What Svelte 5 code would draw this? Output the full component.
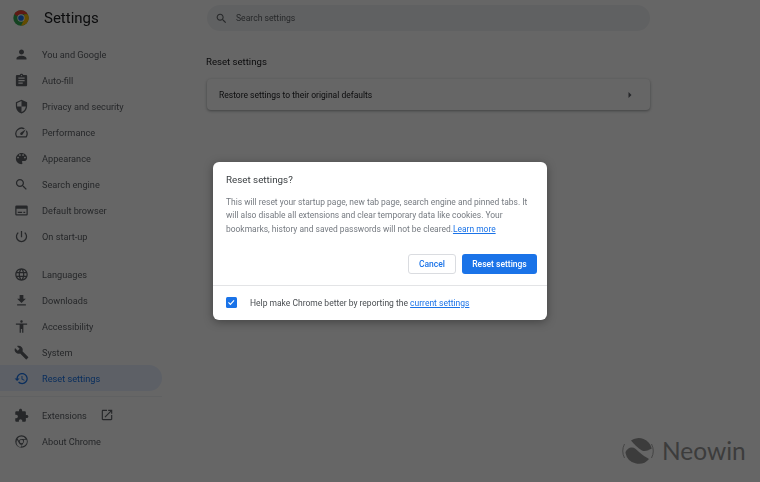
<script lang="ts">
  // Chrome settings page with the "Reset settings?" dialog open over it.
  const icons: Record<string, string> = {
    person: 'M12 12c2.21 0 4-1.79 4-4s-1.79-4-4-4-4 1.79-4 4 1.79 4 4 4zm0 2c-2.67 0-8 1.34-8 4v2h16v-2c0-2.66-5.33-4-8-4z',
    fill: 'M19 3h-4.18C14.4 1.84 13.3 1 12 1c-1.3 0-2.4.84-2.82 2H5c-1.1 0-2 .9-2 2v14c0 1.1.9 2 2 2h14c1.1 0 2-.9 2-2V5c0-1.1-.9-2-2-2zm-7 0c.55 0 1 .45 1 1s-.45 1-1 1-1-.45-1-1 .45-1 1-1zm2 14H7v-2h7v2zm3-4H7v-2h10v2zm0-4H7V7h10v2z',
    shield: 'M12 1L3 5v6c0 5.55 3.84 10.74 9 12 5.16-1.26 9-6.45 9-12V5l-9-4zm0 10.99h7c-.53 4.12-3.28 7.79-7 8.94V12H5V6.3l7-3.11v8.8z',
    speed: 'M20.38 8.57l-1.23 1.85a8 8 0 0 1-.22 7.58H5.07A8 8 0 0 1 15.58 6.85l1.85-1.23A10 10 0 0 0 3.35 19a2 2 0 0 0 1.72 1h13.85a2 2 0 0 0 1.74-1 10 10 0 0 0-.27-10.44zm-9.79 6.84a2 2 0 0 0 2.83 0l5.66-8.49-8.49 5.66a2 2 0 0 0 0 2.83z',
    palette: 'M12 3c-4.97 0-9 4.03-9 9s4.03 9 9 9c.83 0 1.5-.67 1.5-1.5 0-.39-.15-.74-.39-1.01-.23-.26-.38-.61-.38-.99 0-.83.67-1.5 1.5-1.5H16c2.76 0 5-2.24 5-5 0-4.42-4.03-8-9-8zm-5.5 9c-.83 0-1.5-.67-1.5-1.5S5.67 9 6.5 9 8 9.67 8 10.5 7.33 12 6.5 12zm3-4C8.67 8 8 7.33 8 6.5S8.67 5 9.5 5s1.5.67 1.5 1.5S10.33 8 9.5 8zm5 0c-.83 0-1.5-.67-1.5-1.5S13.67 5 14.5 5s1.5.67 1.5 1.5S15.33 8 14.5 8zm3 4c-.83 0-1.5-.67-1.5-1.5S16.67 9 17.5 9s1.5.67 1.5 1.5-.67 1.5-1.5 1.5z',
    search: 'M15.5 14h-.79l-.28-.27C15.41 12.59 16 11.11 16 9.5 16 5.91 13.09 3 9.5 3S3 5.91 3 9.5 5.91 16 9.5 16c1.61 0 3.09-.59 4.23-1.57l.27.28v.79l5 4.99L20.49 19l-4.99-5zm-6 0C7.01 14 5 11.99 5 9.5S7.01 5 9.5 5 14 7.01 14 9.5 11.99 14 9.5 14z',
    browser: 'M20 4H4a2 2 0 0 0-2 2v12a2 2 0 0 0 2 2h16a2 2 0 0 0 2-2V6a2 2 0 0 0-2-2zm0 14H4V9h16zM6 14h7v2H6zm9 0h3v2h-3z',
    power: 'M13 3h-2v10h2V3zm4.83 2.17l-1.42 1.42C17.99 7.86 19 9.81 19 12c0 3.87-3.13 7-7 7s-7-3.13-7-7c0-2.19 1.01-4.14 2.58-5.42L6.17 5.17C4.23 6.82 3 9.26 3 12c0 4.97 4.03 9 9 9s9-4.03 9-9c0-2.74-1.23-5.18-3.17-6.83z',
    globe: 'M11.99 2C6.47 2 2 6.48 2 12s4.47 10 9.99 10C17.52 22 22 17.52 22 12S17.52 2 11.99 2zm6.93 6h-2.95c-.32-1.25-.78-2.45-1.38-3.56 1.84.63 3.37 1.91 4.33 3.56zM12 4.04c.83 1.2 1.48 2.53 1.91 3.96h-3.82c.43-1.43 1.08-2.76 1.91-3.96zM4.26 14C4.1 13.36 4 12.69 4 12s.1-1.36.26-2h3.38c-.08.66-.14 1.32-.14 2 0 .68.06 1.34.14 2H4.26zm.82 2h2.95c.32 1.25.78 2.45 1.38 3.56-1.84-.63-3.37-1.9-4.33-3.56zm2.95-8H5.08c.96-1.66 2.49-2.93 4.33-3.56C8.81 5.55 8.35 6.75 8.03 8zM12 19.96c-.83-1.2-1.48-2.53-1.91-3.96h3.82c-.43 1.43-1.08 2.76-1.91 3.96zM14.34 14H9.66c-.09-.66-.16-1.32-.16-2 0-.68.07-1.35.16-2h4.68c.09.65.16 1.32.16 2 0 .68-.07 1.34-.16 2zm.25 5.56c.6-1.11 1.06-2.31 1.38-3.56h2.95c-.96 1.65-2.49 2.93-4.33 3.56zM16.36 14c.08-.66.14-1.32.14-2 0-.68-.06-1.34-.14-2h3.38c.16.64.26 1.31.26 2s-.1 1.36-.26 2h-3.38z',
    download: 'M19 9h-4V3H9v6H5l7 7 7-7zM5 18v2h14v-2H5z',
    access: 'M12 2c1.1 0 2 .9 2 2s-.9 2-2 2-2-.9-2-2 .9-2 2-2zm9 7h-6v13h-2v-6h-2v6H9V9H3V7h18v2z',
    wrench: 'M22.7 19l-9.1-9.1c.9-2.3.4-5-1.5-6.9-2-2-5-2.4-7.4-1.3L9 6 6 9 1.6 4.7C.4 7.1.9 10.1 2.9 12.1c1.9 1.9 4.6 2.4 6.9 1.5l9.1 9.1c.4.4 1 .4 1.4 0l2.3-2.3c.5-.4.5-1.1.1-1.4z',
    restore: 'M13 3c-4.97 0-9 4.03-9 9H1l3.89 3.89.07.14L9 12H6c0-3.87 3.13-7 7-7s7 3.13 7 7-3.13 7-7 7c-1.93 0-3.68-.79-4.94-2.06l-1.42 1.42C8.27 19.99 10.51 21 13 21c4.97 0 9-4.03 9-9s-4.03-9-9-9zm-1 5v5l4.28 2.54.72-1.21-3.5-2.08V8H12z',
    puzzle: 'M20.5 11H19V7c0-1.1-.9-2-2-2h-4V3.5C13 2.12 11.88 1 10.5 1S8 2.12 8 3.5V5H4c-1.1 0-1.99.9-1.99 2v3.8H3.5c1.49 0 2.7 1.21 2.7 2.7s-1.21 2.7-2.7 2.7H2V20c0 1.1.9 2 2 2h3.8v-1.5c0-1.49 1.21-2.7 2.7-2.7 1.49 0 2.7 1.21 2.7 2.7V22H17c1.1 0 2-.9 2-2v-4h1.5c1.38 0 2.5-1.12 2.5-2.5S21.88 11 20.5 11z',
    open: 'M19 19H5V5h7V3H5c-1.11 0-2 .9-2 2v14c0 1.1.89 2 2 2h14c1.1 0 2-.9 2-2v-7h-2v7zM14 3v2h3.59l-9.83 9.83 1.41 1.41L19 6.41V10h2V3h-7z',
    chrome: 'M12 2a10 10 0 1 0 0 20 10 10 0 0 0 0-20zm0 2.2a7.8 7.8 0 0 1 6.6 3.6H12a4.3 4.3 0 0 0-4.1 3L5.6 7a7.8 7.8 0 0 1 6.4-2.8zM4.2 12c0-1 .2-2 .6-2.9l3.3 5.7a4.3 4.3 0 0 0 4.5 2.4l-2.3 4A7.8 7.8 0 0 1 4.2 12zm7.8 2.8a2.8 2.8 0 1 1 0-5.6 2.8 2.8 0 0 1 0 5.6zm.6 5a7.8 7.8 0 0 1-.9 0l3.3-5.6a4.3 4.3 0 0 0 .4-5.1h4.6a7.8 7.8 0 0 1-7.4 10.7z'
  };

  const groupA = [
    ['person', 'You and Google'],
    ['fill', 'Auto-fill'],
    ['shield', 'Privacy and security'],
    ['speed', 'Performance'],
    ['palette', 'Appearance'],
    ['search', 'Search engine'],
    ['browser', 'Default browser'],
    ['power', 'On start-up']
  ];
  const groupB = [
    ['globe', 'Languages'],
    ['download', 'Downloads'],
    ['access', 'Accessibility'],
    ['wrench', 'System'],
    ['restore', 'Reset settings']
  ];
</script>

{#snippet icon(name: string)}
  <svg class="icon" viewBox="0 0 24 24"><path d={icons[name]} /></svg>
{/snippet}

{#snippet row(name: string, label: string)}
  <div class="item" class:active={label === 'Reset settings'}>
    {@render icon(name)}
    <span>{label}</span>
  </div>
{/snippet}

<div class="page">
  <header class="top">
    <div class="brand">
      <svg class="logo" viewBox="0 0 48 48">
        <circle cx="24" cy="24" r="23" fill="#34a853" />
        <path d="M24 1a23 23 0 0 1 20 11.5H24L10.5 18 4 12A23 23 0 0 1 24 1z" fill="#ea4335" />
        <path d="M44 12.5A23 23 0 0 1 24 47l9-17 1-17.5z" fill="#fbbc04" />
        <circle cx="24" cy="24" r="11" fill="#fff" />
        <circle cx="24" cy="24" r="8.5" fill="#1a73e8" />
      </svg>
      <h1>Settings</h1>
    </div>
    <div class="search">
      <svg class="icon" viewBox="0 0 24 24"><path d={icons.search} /></svg>
      <span>Search settings</span>
    </div>
  </header>

  <div class="body">
    <nav class="side">
      <div class="group">
        {#each groupA as [name, label]}
          {@render row(name, label)}
        {/each}
      </div>
      <div class="group second">
        {#each groupB as [name, label]}
          {@render row(name, label)}
        {/each}
      </div>
      <div class="sep"></div>
      <div class="item">
        {@render icon('puzzle')}
        <span>Extensions</span>
        <svg class="icon ext" viewBox="0 0 24 24"><path d={icons.open} /></svg>
      </div>
      {@render row('chrome', 'About Chrome')}
    </nav>

    <main class="main">
      <h2>Reset settings</h2>
      <div class="card">
        <span>Restore settings to their original defaults</span>
        <svg class="arrow" viewBox="0 0 6 8"><path d="M1.5 1l3 3-3 3z" /></svg>
      </div>
    </main>
  </div>
</div>

<div class="scrim">
  <div class="dialog" role="dialog">
    <div class="title">Reset settings?</div>
    <p class="text">
      This will reset your startup page, new tab page, search engine and pinned tabs. It
      will also disable all extensions and clear temporary data like cookies. Your
      bookmarks, history and saved passwords will not be cleared.<a href="#more">Learn more</a>
    </p>
    <div class="actions">
      <button class="btn">Cancel</button>
      <button class="btn primary">Reset settings</button>
    </div>
    <div class="foot">
      <span class="check">
        <svg viewBox="0 0 12 12"><path d="M2.8 6.2l2.2 2.2 4.2-4.6" /></svg>
      </span>
      <span>Help make Chrome better by reporting the <a href="#current">current settings</a></span>
    </div>
  </div>
</div>

<div class="mark">
  <svg viewBox="0 0 32 32" class="mark-logo">
    <path d="M9 5.500A13.500 13.500 0 0 1 29.800 13.500C27 15 23 17 20 15.500C16 13.500 12 9 9 5.500z" />
    <path d="M3.500 18C3.500 16 6 13 9 12.500C12 12 14 14 17 17C20 20 24 22 27 24A13.500 13.500 0 0 1 3.500 18z" />
    <path class="thin" d="M2.500 9A15.500 15.500 0 0 0 2.500 23M29.500 9a15.500 15.500 0 0 1 0 14" />
  </svg>
  <span>Neowin</span>
</div>

<style>
  :global(body) {
    margin: 0;
    background: #fff;
    overflow: hidden;
  }
  .page {
    width: 760px;
    height: 482px;
    font-family: Roboto, "Liberation Sans", sans-serif;
    font-size: 9.2px;
    color: #5f6368;
    display: flex;
    flex-direction: column;
    filter: blur(0.45px);
  }
  .top {
    display: flex;
    height: 36px;
    flex: none;
    margin-bottom: 5px;
  }
  .brand {
    width: 207px;
    flex: none;
    display: flex;
    align-items: center;
    gap: 15px;
    padding-left: 13px;
    box-sizing: border-box;
  }
  .logo {
    width: 16px;
    height: 16px;
  }
  h1 {
    margin: 0;
    font-size: 15px;
    font-weight: 400;
    color: #202124;
  }
  .search {
    width: 443px;
    height: 26px;
    margin-top: 5px;
    border-radius: 13px;
    background: #f1f3f4;
    display: flex;
    align-items: center;
    gap: 8px;
    padding-left: 8px;
    box-sizing: border-box;
    font-size: 8.6px;
  }
  .search .icon {
    width: 13px;
    height: 13px;
  }
  .body {
    display: flex;
    flex: 1;
  }
  .side {
    width: 162px;
    flex: none;
  }
  .item {
    height: 26px;
    display: flex;
    align-items: center;
    gap: 13px;
    padding-left: 14px;
    border-radius: 0 13px 13px 0;
  }
  .second {
    margin-top: 12px;
  }
  .active {
    background: #e8f0fe;
    color: #1a73e8;
  }
  .icon {
    width: 15px;
    height: 15px;
    flex: none;
    fill: currentColor;
  }
  .ext {
    width: 14px;
    height: 14px;
  }
  .sep {
    height: 1px;
    margin: 5px 0;
    background: #f1f3f4;
  }
  .main {
    margin-left: 44px;
    width: 444px;
  }
  h2 {
    margin: 14px 0 10px;
    font-size: 9.6px;
    line-height: 14px;
    font-weight: 400;
    color: #202124;
  }
  .card {
    height: 31px;
    margin-left: 1px;
    width: 443px;
    border-radius: 4px;
    background: #fff;
    box-shadow: 0 1px 2px rgba(60, 64, 67, 0.3), 0 1px 3px 1px rgba(60, 64, 67, 0.15);
    display: flex;
    align-items: center;
    justify-content: space-between;
    padding: 0 17px 0 12px;
    box-sizing: border-box;
    color: #202124;
    font-size: 8.5px;
  }
  .arrow {
    width: 6px;
    height: 8px;
    fill: #5f6368;
  }
  .scrim {
    position: absolute;
    inset: 0;
    background: rgba(0, 0, 0, 0.6);
    display: flex;
    align-items: center;
    justify-content: center;
    font-family: Roboto, "Liberation Sans", sans-serif;
  }
  .dialog {
    width: 334px;
    height: 158px;
    background: #fff;
    border-radius: 6px;
    box-shadow: 0 2px 10px rgba(0, 0, 0, 0.35);
    box-sizing: border-box;
    display: flex;
    flex-direction: column;
    filter: blur(0.35px);
  }
  .title {
    padding: 11px 13px 0;
    font-size: 9.8px;
    line-height: 14px;
    color: #3c4043;
  }
  .text {
    margin: 9px 13px 0;
    font-size: 8.45px;
    line-height: 13.4px;
    color: #757a80;
  }
  a {
    color: #1a73e8;
  }
  .actions {
    display: flex;
    justify-content: flex-end;
    gap: 6px;
    padding-right: 10px;
    margin-top: 18px;
  }
  .btn {
    height: 20px;
    padding: 0;
    width: 48px;
    border: 1px solid #dadce0;
    border-radius: 3px;
    background: #fff;
    color: #1a73e8;
    font: 500 8.5px Roboto, "Liberation Sans", sans-serif;
  }
  .primary {
    width: 75px;
    border: 0;
    background: #1a73e8;
    color: #fff;
  }
  .foot {
    margin-top: auto;
    height: 35px;
    border-top: 1px solid #e3e4e6;
    display: flex;
    align-items: center;
    gap: 13.5px;
    padding: 0 0 1px 13px;
    box-sizing: border-box;
    font-size: 8.5px;
    color: #4a4e52;
  }
  .check {
    width: 10.5px;
    height: 10.5px;
    border-radius: 1.5px;
    background: #1a73e8;
    flex: none;
  }
  .check svg {
    display: block;
    width: 10.5px;
    height: 10.5px;
    fill: none;
    stroke: #fff;
    stroke-width: 1.3;
  }
  .mark {
    position: absolute;
    left: 622px;
    top: 435px;
    display: flex;
    align-items: center;
    gap: 8px;
    color: #3c3c3c;
    font: 400 24.5px Lato, "Open Sans", sans-serif;
    line-height: 32px;
  }
  .mark-logo {
    width: 32px;
    height: 32px;
    fill: #3c3c3c;
  }
  .mark-logo .thin {
    fill: none;
    stroke: #3c3c3c;
    stroke-width: 0.8;
  }
</style>
